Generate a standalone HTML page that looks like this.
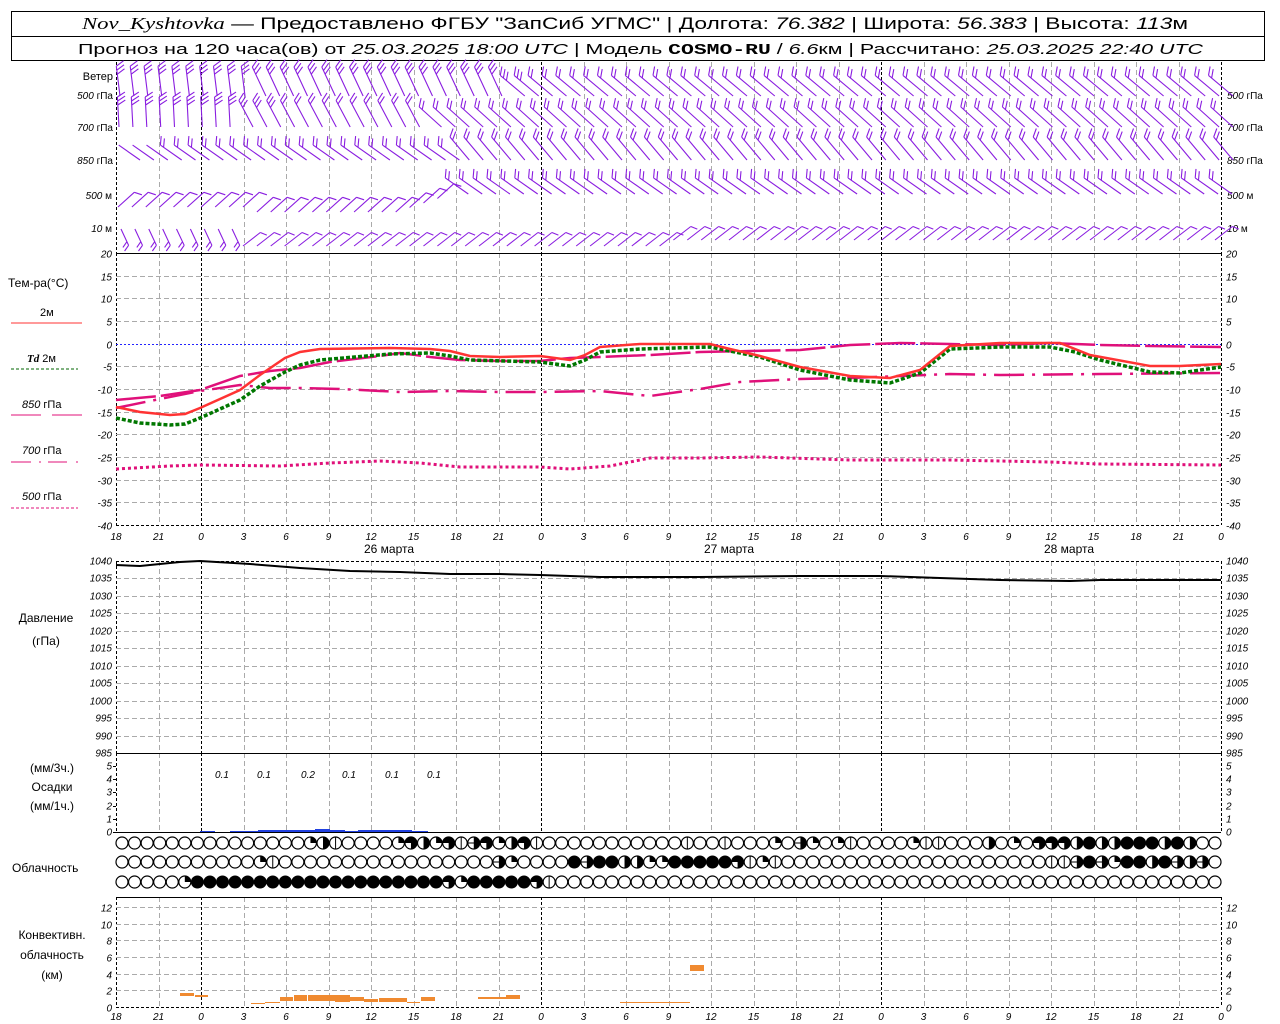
<!DOCTYPE html>
<html><head><meta charset="utf-8">
<style>
html,body{margin:0;padding:0;background:#fff;width:1280px;height:1024px;overflow:hidden}
svg{display:block}
text{font-family:"Liberation Sans","DejaVu Sans",sans-serif;fill:#000}
.t{font-size:10px;font-style:italic}
.l{font-size:12px}
</style></head>
<body>
<svg id="s" width="1280" height="1024" viewBox="0 0 1280 1024" xmlns="http://www.w3.org/2000/svg">
<rect x="11.5" y="11.5" width="1253" height="49" fill="none" stroke="#000"/>
<line x1="11" y1="36.5" x2="1265" y2="36.5" stroke="#000"/>
<text x="82" y="29" font-size="17" textLength="1106" lengthAdjust="spacingAndGlyphs"><tspan font-family="Liberation Serif,serif" font-style="italic">Nov_Kyshtovka</tspan> — Предоставлено ФГБУ "ЗапСиб УГМС" | Долгота: <tspan font-style="italic">76.382</tspan> | Широта: <tspan font-style="italic">56.383</tspan> | Высота: <tspan font-style="italic">113</tspan>м</text>
<text x="78" y="54" font-size="15" textLength="1125" lengthAdjust="spacingAndGlyphs">Прогноз на 120 часа(ов) от <tspan font-style="italic">25.03.2025 18:00 UTC</tspan> | Модель <tspan font-family="Liberation Mono,monospace" font-weight="bold">COSMO-RU</tspan> / <tspan font-style="italic">6.6</tspan>км | Рассчитано: <tspan font-style="italic">25.03.2025 22:40 UTC</tspan></text>

<g class="l">
<text x="113" y="80" text-anchor="end" font-size="11">Ветер</text>
<text x="113" y="99" text-anchor="end" font-size="10"><tspan font-style="italic">500</tspan> гПа</text>
<text x="113" y="131" text-anchor="end" font-size="10"><tspan font-style="italic">700</tspan> гПа</text>
<text x="113" y="164" text-anchor="end" font-size="10"><tspan font-style="italic">850</tspan> гПа</text>
<text x="112" y="199" text-anchor="end" font-size="10"><tspan font-style="italic">500</tspan>  м</text>
<text x="112" y="232" text-anchor="end" font-size="10"><tspan font-style="italic">10</tspan>   м</text>
<text x="1227" y="99" font-size="10"><tspan font-style="italic">500</tspan> гПа</text>
<text x="1227" y="131" font-size="10"><tspan font-style="italic">700</tspan> гПа</text>
<text x="1227" y="164" font-size="10"><tspan font-style="italic">850</tspan> гПа</text>
<text x="1227" y="199" font-size="10"><tspan font-style="italic">500</tspan>  м</text>
<text x="1227" y="232" font-size="10"><tspan font-style="italic">10</tspan>   м</text>

<text x="8" y="287">Тем-ра(°С)</text>
<text x="40" y="316" font-size="11">2м</text>
<line x1="11" y1="323" x2="82" y2="323" stroke="#f33" stroke-width="1"/>
<text x="27" y="362" font-size="11"><tspan font-style="italic" font-weight="bold" font-family="Liberation Serif,serif">Td</tspan>  2м</text>
<line x1="11" y1="369" x2="78" y2="369" stroke="#060" stroke-dasharray="3,2"/>
<text x="22" y="408" font-size="11"><tspan font-style="italic">850</tspan> гПа</text>
<line x1="11" y1="415" x2="41" y2="415" stroke="#e0107a"/><line x1="52" y1="415" x2="82" y2="415" stroke="#e0107a"/>
<text x="22" y="454" font-size="11"><tspan font-style="italic">700</tspan> гПа</text>
<path d="M11 462h20M39 462h2M48 462h19M76 462h2" stroke="#e0107a"/>
<text x="22" y="500" font-size="11"><tspan font-style="italic">500</tspan> гПа</text>
<line x1="11" y1="508" x2="78" y2="508" stroke="#e0107a" stroke-dasharray="3,2"/>

<text x="46" y="622" text-anchor="middle">Давление</text>
<text x="46" y="645" text-anchor="middle">(гПа)</text>
<text x="52" y="772" text-anchor="middle">(мм/3ч.)</text>
<text x="52" y="791" text-anchor="middle">Осадки</text>
<text x="52" y="810" text-anchor="middle">(мм/1ч.)</text>
<text x="12" y="872">Облачность</text>
<text x="52" y="939" text-anchor="middle">Конвективн.</text>
<text x="52" y="959" text-anchor="middle">облачность</text>
<text x="52" y="979" text-anchor="middle">(км)</text>
<text x="389" y="553" text-anchor="middle">26 марта</text>
<text x="729" y="553" text-anchor="middle">27 марта</text>
<text x="1069" y="553" text-anchor="middle">28 марта</text>
</g>
<g id="dyn"></g>
</svg>
<script>
(function(){
var NS="http://www.w3.org/2000/svg",g=document.getElementById("dyn");
function el(n,a,t){var e=document.createElementNS(NS,n);for(var k in a)e.setAttribute(k,a[k]);if(t!==undefined)e.textContent=t;g.appendChild(e);return e;}
var X0=116,X1=1221,TOT=78,px=(X1-X0)/TOT;
function X(h){return X0+h*px;}
var panels=[[62,253],[253,525],[561,753],[753,832],[897,1007]];
for(var h=0;h<=TOT;h+=3){
  var x=Math.round(X(h))+.5,day=((h+18)%24==0)||h==0||h==TOT;
  panels.forEach(function(p){el("line",{x1:x,y1:p[0],x2:x,y2:p[1],stroke:day?"#000":"#aaa","stroke-dasharray":day?"3,2":"5,3"});});
}
function hgrid(y,black){el("line",{x1:X0,y1:y,x2:X1,y2:y,stroke:black?"#000":"#aaa","stroke-dasharray":black?"":"5,3"});}
function hdash(y){el("line",{x1:X0,y1:y,x2:X1,y2:y,stroke:"#000","stroke-dasharray":"3,2"});}
for(var T=20;T>=-40;T-=5){var y=Math.round(253+(20-T)*4.533)+.5;
 if(T==20)hgrid(y,1);else if(T==-40)hdash(y);else if(T==0)el("line",{x1:X0,y1:y,x2:X1,y2:y,stroke:"#22f","stroke-dasharray":"2,2"});else hgrid(y);
 el("text",{x:112,y:y+4,"text-anchor":"end","class":"t"},T);el("text",{x:1226,y:y+4,"class":"t"},T);}
for(var P=1040;P>=985;P-=5){var y=Math.round(561+(1040-P)*3.49)+.5;
 if(P==1040)hdash(y);else if(P==985)hgrid(y,1);else hgrid(y);
 el("text",{x:112,y:y+3,"text-anchor":"end","class":"t","font-size":"9"},P);el("text",{x:1226,y:y+3,"class":"t","font-size":"9"},P);}
for(var v=0;v<=5;v++){var y=Math.round(832-v*13.2)+.5;el("text",{x:112,y:y+3,"text-anchor":"end","class":"t","font-size":"9"},v);el("text",{x:1226,y:y+3,"class":"t","font-size":"9"},v);
 el("line",{x1:X0-3,y1:y,x2:X0,y2:y,stroke:"#000"});}
hgrid(832.5,1);
[["0.1",222],["0.1",264],["0.2",308],["0.1",349],["0.1",392],["0.1",434]].forEach(function(a){el("text",{x:a[1],y:778,"text-anchor":"middle","class":"t","font-size":"13"},a[0]);});
for(var k=0;k<=12;k+=2){var y=Math.round(1007-k*8.33)+.5;
 if(k==0)hdash(y);else hgrid(y);
 el("text",{x:112,y:y+4,"text-anchor":"end","class":"t"},k);el("text",{x:1226,y:y+4,"class":"t"},k);}
hgrid(897.5,1);
var lbl=[18,21,0,3,6,9,12,15];
for(var i=0;i<=TOT/3;i++){var L=lbl[i%8];
 el("text",{x:X(i*3),y:540,"text-anchor":"middle","class":"t","font-size":"14"},L);
 el("text",{x:X(i*3),y:1020,"text-anchor":"middle","class":"t","font-size":"14"},L);}
function curve(pts,attrs){var d="M"+pts.map(function(p){return p[0]+" "+p[1]}).join(" L");attrs.d=d;attrs.fill="none";el("path",attrs);}
var T2=[[116,407],[140,412],[170,415],[185,414],[200,408],[240,390],[260,375],[285,358],[300,352],[320,349],[390,348],[430,349],[450,351],[470,356],[500,357],[540,356],[570,360],[585,355],[600,347],[640,344],[710,344],[730,349],[760,356],[800,367],[850,376],[890,378],[920,370],[935,358],[950,346],[1000,343],[1060,343],[1090,355],[1150,366],[1180,366],[1221,364]];
var TD=[[116,418],[140,423],[170,425],[185,424],[200,418],[240,400],[260,386],[285,372],[300,365],[320,360],[390,354],[430,353],[450,356],[470,360],[540,362],[570,366],[585,360],[600,352],[640,349],[710,347],[730,351],[760,357],[800,370],[850,380],[890,383],[920,373],[935,361],[950,349],[1000,347],[1050,347],[1075,352],[1100,360],[1150,372],[1180,373],[1221,367]];
var P85=[[116,400],[160,396],[200,390],[240,376],[270,371],[300,368],[330,362],[380,356],[400,353],[430,357],[460,360],[500,361],[540,361],[570,358],[600,357],[650,355],[700,352],[750,351],[800,350],[850,345],[900,343],[950,344],[1000,345],[1050,343],[1100,345],[1150,346],[1221,347]];
var P70=[[116,408],[150,401],[200,391],[240,385],[270,388],[300,388],[340,389],[400,392],[450,391],[500,392],[540,392],[600,391],[650,396],[700,389],[740,382],[800,379],[850,378],[900,376],[950,374],[1000,375],[1100,374],[1221,373]];
var P50=[[116,469],[170,466],[200,465],[280,466],[330,463],[380,461],[420,463],[460,467],[540,467],[570,469],[610,466],[650,458],[700,458],[760,457],[850,460],[900,460],[950,460],[1050,462],[1100,464],[1221,465]];
curve(P50,{stroke:"#e0107a","stroke-width":3,"stroke-dasharray":"3,3"});
curve(P70,{stroke:"#e0107a","stroke-width":2.5,"stroke-dasharray":"30,8,3,8"});
curve(P85,{stroke:"#e0107a","stroke-width":2.5,"stroke-dasharray":"40,5"});
curve(TD,{stroke:"#070","stroke-width":3.5,"stroke-dasharray":"4,2"});
curve(T2,{stroke:"#f33","stroke-width":2.5});
var PR=[[116,565],[140,566],[180,562],[200,561],[250,564],[300,568],[350,571],[400,572],[450,574],[500,574],[540,575],[600,577],[650,577],[700,577],[800,576],[880,576],[940,578],[1000,580],[1070,581],[1100,580],[1221,580]];
curve(PR,{stroke:"#000","stroke-width":2});
[[200,215,1],[230,258,1],[258,290,2],[290,315,2],[315,330,3],[330,345,2],[345,358,1],[358,412,2],[412,428,1]].forEach(function(b){el("rect",{x:b[0],y:832-b[2],width:b[1]-b[0],height:b[2],fill:"#2040e0"});});
[[180,194,993,996],[195,208,995,997],[251,265,1003,1004],[265,280,1002,1003],[280,293,997,1001],[294,307,995,1001],[308,335,995,1001],[335,350,995,1002],[350,364,997,1001],[364,378,999,1002],[379,407,998,1002],[407,420,1002,1003],[421,435,997,1001],[478,506,997,999],[506,520,995,999],[620,690,1002,1003],[690,704,965,971]].forEach(function(b){el("rect",{x:b[0],y:b[2],width:b[1]-b[0],height:Math.max(1,b[3]-b[2]),fill:"#f08a30"});});
var rows=[
"000000000000000qhv0000qthqtvetqhtv00000000000v00v000q0eq0qv0000qvv000h0q0ttthfhhfffhfh",
"00000000000qv00000000000000000eq0000feffhhqqffffftvqv000000000000000000000vvefeqffhfehe",
"00000qfffffffffffffffffffftqffffftv00000000000000000000000000000000000000000000000000000"];
var ys=[843,862,882],N=88,cx0=122,pitch=(1215-122)/(N-1),r=6;
rows.forEach(function(s,ri){for(var i=0;i<N;i++){var c=s[i]||"0",cx=cx0+i*pitch,cy=ys[ri];
 if(c=="f"){el("circle",{cx:cx,cy:cy,r:r,fill:"#000",stroke:"#000"});continue;}
 el("circle",{cx:cx,cy:cy,r:r,fill:"#fff",stroke:"#000","stroke-width":1.2});
 if(c=="q")el("path",{d:"M"+cx+" "+cy+"V"+(cy-r)+"A"+r+" "+r+" 0 0 1 "+(cx+r)+" "+cy+"Z",fill:"#000"});
 if(c=="h")el("path",{d:"M"+cx+" "+(cy-r)+"A"+r+" "+r+" 0 0 1 "+cx+" "+(cy+r)+"Z",fill:"#000"});
 if(c=="t")el("path",{d:"M"+cx+" "+cy+"H"+(cx-r)+"A"+r+" "+r+" 0 1 1 "+cx+" "+(cy+r)+"Z",fill:"#000"});
 if(c=="v")el("line",{x1:cx,y1:cy-r,x2:cx,y2:cy+r,stroke:"#000"});
 if(c=="e"){el("line",{x1:cx-r,y1:cy,x2:cx+r,y2:cy,stroke:"#000"});el("path",{d:"M"+cx+" "+(cy-r)+"A"+r+" "+r+" 0 0 1 "+cx+" "+(cy+r)+"Z",fill:"#000"});}
}});
var col="#8a1ee0",NB=80,bp=(1215-118)/(NB-1);
function barb(x,y,ang,len,nf,fl){var a=ang*Math.PI/180,dx=Math.cos(a),dy=Math.sin(a),tx=x+dx*len,ty=y+dy*len;
 var d="M"+x.toFixed(1)+" "+y.toFixed(1)+"L"+tx.toFixed(1)+" "+ty.toFixed(1);
 var fa=a+60*Math.PI/180,fx=Math.cos(fa)*fl,fy=Math.sin(fa)*fl;
 for(var k=0;k<nf;k++){var bx=tx-dx*k*4,by=ty-dy*k*4;d+="M"+bx.toFixed(1)+" "+by.toFixed(1)+"l"+fx.toFixed(1)+" "+fy.toFixed(1);}
 el("path",{d:d,stroke:col,fill:"none","stroke-width":1.1});}
for(var i=0;i<NB;i++){var x=118+i*bp;
 var a=i<10?-97:(i<28?-115:-140);barb(x+(i<10?2:(i<28?9:18)),96,a,i<10?30:32,i<30?3:2,9);
 a=i<9?-93:(i<22?-118:-138);barb(x+(i<9?1:(i<22?10:18)),127,a,30,i<12?3:2,9);
 a=i<24?-145:-130;barb(x+(i<24?22:18),160,a,i<24?26:30,i<3?0:2,9);
 var by=i<10?207:(i<21?212:(i<24?212-(i-20)*4.5:194));
 if(i<24)barb(x,by,-42,22,1,8);else barb(x+17,by,-145,28,2,9);
 if(i<9)barb(x+3,229,65,18,2,7);else barb(x,(i<40?246:240),-38,22,1,7);
}
})();
</script>
</body></html>
